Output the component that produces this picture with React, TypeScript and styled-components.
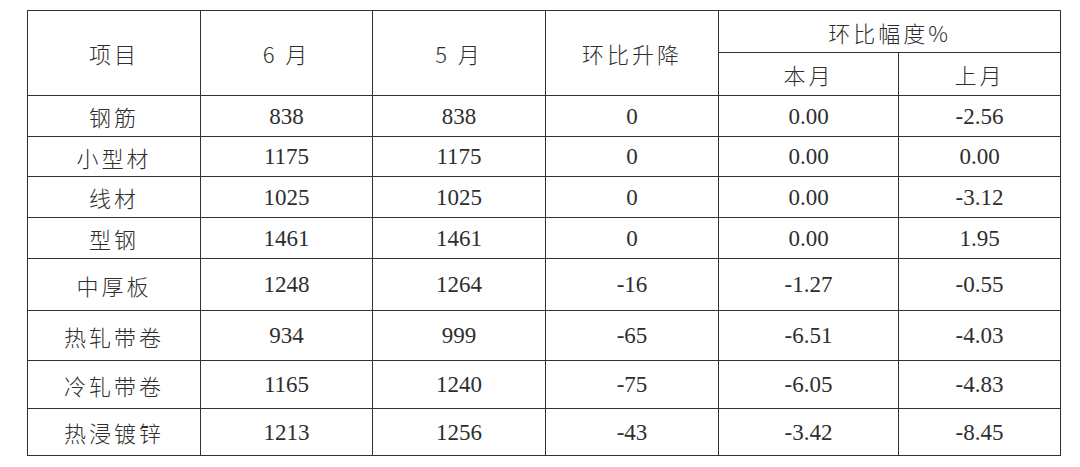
import React from 'react'
import styled, { createGlobalStyle } from 'styled-components'

const GlobalStyle = createGlobalStyle`
    html, body {
        margin: 0;
        padding: 0;
        background: #ffffff;
    }
`

type Row = {
    name: string
    jun: string
    may: string
    diff: string
    cur: string
    prev: string
    height: number
}

const rows: Row[] = [
    { name: '钢筋', jun: '838', may: '838', diff: '0', cur: '0.00', prev: '-2.56', height: 41 },
    { name: '小型材', jun: '1175', may: '1175', diff: '0', cur: '0.00', prev: '0.00', height: 40 },
    { name: '线材', jun: '1025', may: '1025', diff: '0', cur: '0.00', prev: '-3.12', height: 41 },
    { name: '型钢', jun: '1461', may: '1461', diff: '0', cur: '0.00', prev: '1.95', height: 41 },
    { name: '中厚板', jun: '1248', may: '1264', diff: '-16', cur: '-1.27', prev: '-0.55', height: 52 },
    { name: '热轧带卷', jun: '934', may: '999', diff: '-65', cur: '-6.51', prev: '-4.03', height: 50 },
    { name: '冷轧带卷', jun: '1165', may: '1240', diff: '-75', cur: '-6.05', prev: '-4.83', height: 48 },
    { name: '热浸镀锌', jun: '1213', may: '1256', diff: '-43', cur: '-3.42', prev: '-8.45', height: 47 },
]

const colWidths = [173, 172, 173, 173, 180, 162]

const App = () => {
    return (
        <Page>
            <GlobalStyle />
            <PriceTable>
                <colgroup>
                    {colWidths.map((w, i) => <col key={i} style={{ width: w }} />)}
                </colgroup>
                <thead>
                    <tr>
                        <HeadCell rowSpan={2} $cjk>项目</HeadCell>
                        <HeadCell rowSpan={2} $cjk>6 月</HeadCell>
                        <HeadCell rowSpan={2} $cjk>5 月</HeadCell>
                        <HeadCell rowSpan={2} $cjk>环比升降</HeadCell>
                        <HeadCell colSpan={2} $cjk $h={41}>环比幅度%</HeadCell>
                    </tr>
                    <tr>
                        <HeadCell $cjk $h={42}>本月</HeadCell>
                        <HeadCell $cjk $h={42}>上月</HeadCell>
                    </tr>
                </thead>
                <tbody>
                    {rows.map(r => (
                        <tr key={r.name} style={{ height: r.height }}>
                            <Cell $cjk>{r.name}</Cell>
                            <Cell>{r.jun}</Cell>
                            <Cell>{r.may}</Cell>
                            <Cell>{r.diff}</Cell>
                            <Cell>{r.cur}</Cell>
                            <Cell>{r.prev}</Cell>
                        </tr>
                    ))}
                </tbody>
            </PriceTable>
        </Page>
    )
}

export default App

const Page = styled.div`
    width: 1080px;
    height: 467px;
    padding: 10px 0 0 27px;
    box-sizing: border-box;
    background: #fff;
`

const PriceTable = styled.table`
    border-collapse: collapse;
    table-layout: fixed;
    width: 1034px;
    color: #2e2e2e;
`

interface CellProps {
    $cjk?: boolean
    $h?: number
}

const Cell = styled.td<CellProps>`
    border: 1.5px solid #333;
    padding: 0;
    text-align: center;
    vertical-align: middle;
    font-family: ${({ $cjk }) => $cjk
        ? '"Noto Sans CJK SC", sans-serif'
        : '"Liberation Serif", "Times New Roman", serif'};
    font-weight: ${({ $cjk }) => $cjk ? 300 : 400};
    font-size: ${({ $cjk }) => $cjk ? '22px' : '23px'};
    letter-spacing: ${({ $cjk }) => $cjk ? '3px' : '0'};
    line-height: 1;
    ${({ $h }) => $h ? `height: ${$h}px;` : ''}
`

const HeadCell = styled(Cell).attrs({ as: 'th' })`
    font-weight: 300;
`
